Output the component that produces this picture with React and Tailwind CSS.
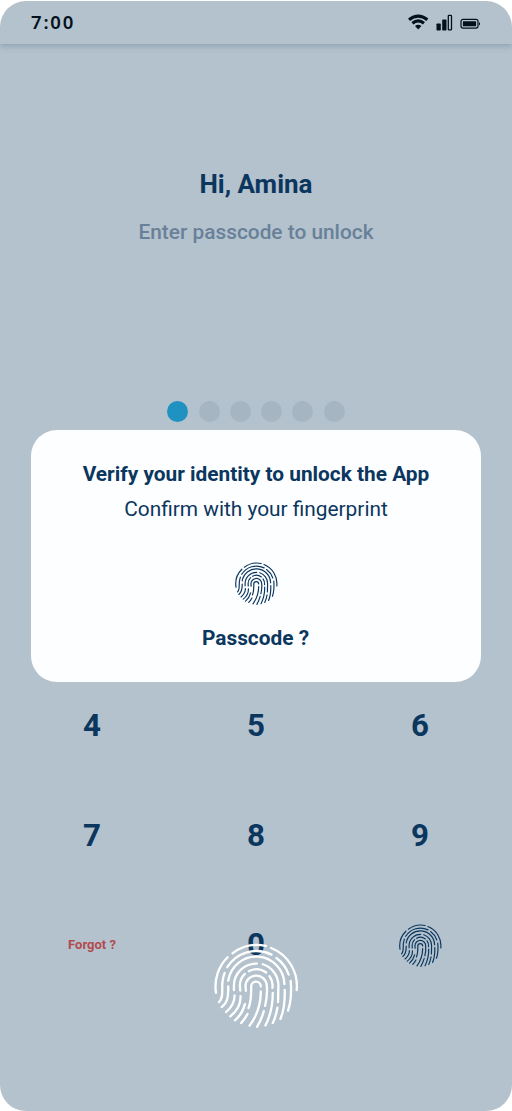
import React from "react";

const ridges = [
  "M82 99 A122 122 0 0 1 182 77",
  "M198 83 A123 123 0 0 1 275 210",
  "M67 111 A123 123 0 0 0 32 218",
  "M66 141 A103 103 0 0 1 199 103",
  "M214 113 A104 104 0 0 1 251 163",
  "M41 246 C51 237 51 224 51 208 C50 190 52 174 58 158",
  "M257 182 C260 216 258 246 249 272",
  "M69 181 A85 85 0 0 1 238 192",
  "M49 261 C66 249 69 233 69 199",
  "M239 209 C240 242 237 270 226 297",
  "M86 210 L86 197 A67 67 0 0 1 155 130",
  "M173 132 A67 67 0 0 1 220 197 L219 246",
  "M62 276 C80 261 88 247 88 226",
  "M217 263 C214 280 210 295 203 309",
  "M105 211 L104 197 A49 49 0 0 1 119 161",
  "M131 153 A49 49 0 0 1 183 157",
  "M193 168 A49 49 0 0 1 202 203",
  "M75 289 C97 272 107 254 106 228",
  "M203 218 C203 254 196 287 181 316",
  "M122 212 L121 198 A32 32 0 0 1 185 198 C187 221 184 240 180 257",
  "M89 301 C104 288 114 272 119 252",
  "M108 309 C116 300 122 291 127 282",
  "M130 264 C139 243 138 222 138 199 A14.5 14.5 0 0 1 167 199",
  "M167 214 C167 252 156 286 133 317",
  "M176 273 C171 290 165 306 156 320",
];

function Fingerprint({ className, strokeWidth = 7 }) {
  return (
    <svg viewBox="26 68 256 256" className={className} fill="none" stroke="currentColor" strokeWidth={strokeWidth} strokeLinecap="round">
      {ridges.map((d) => <path key={d} d={d} />)}
    </svg>
  );
}

function StatusBar() {
  return (
    <header className="flex h-[43px] shrink-0 items-center justify-between pl-[31px] pr-[30px] pt-[2px] text-[#03111d] shadow-[0_3px_5px_rgba(100,125,145,0.4)]">
      <span className="-mt-[3px] font-[family-name:'Noto_Sans',sans-serif] text-[18.5px] leading-none font-semibold tracking-[1.8px]">7:00</span>
      <svg viewBox="0 0 74 18" className="-mt-px h-[18px] w-[74px]" fill="none" stroke="currentColor">
        <path d="M1 5.8 Q10.2 -1.5 19.4 5.8 M4.4 9.2 Q10.2 4.4 16 9.2" strokeWidth="3.1" />
        <path d="M7 12 Q10.2 9.5 13.4 12 L10.2 15.5 Z" fill="currentColor" stroke="none" />
        <rect x="28.5" y="9.5" width="4.3" height="7" rx="0.7" fill="currentColor" stroke="none" />
        <rect x="34.2" y="5.4" width="4.3" height="11.1" rx="0.7" fill="currentColor" stroke="none" />
        <rect x="40.3" y="1.4" width="3.2" height="14.5" rx="0.7" strokeWidth="1.3" />
        <rect x="53" y="5.3" width="17" height="8.8" rx="2" strokeWidth="1.2" />
        <rect x="54.9" y="7.2" width="13.2" height="5" rx="0.5" fill="currentColor" stroke="none" />
        <path d="M71 7.9 Q73.2 9.7 71 11.5 Z" fill="currentColor" stroke="none" />
      </svg>
    </header>
  );
}

function VerifyCard() {
  return (
    <section className="absolute left-[31px] top-[430px] flex h-[252px] w-[450px] flex-col items-center rounded-[26px] bg-[#fdfeff] pt-[31px]">
      <h2 className="text-[20.85px] leading-[26px] font-bold whitespace-nowrap">Verify your identity to unlock the App</h2>
      <p className="mt-[9px] text-[20.85px] leading-[26px] whitespace-nowrap">Confirm with your fingerprint</p>
      <Fingerprint className="mt-[40.3px] size-[43px]" />
      <button className="mt-[19.7px] -ml-px text-[20.85px] leading-[26px] font-bold">Passcode ?</button>
    </section>
  );
}

export default function App() {
  return (
    <div className="h-[1111px] w-[512px] bg-white font-[Roboto,sans-serif] text-[#0b365e]">
      <main className="relative h-[1111px] bg-white pt-px">
        <div className="flex h-[1110px] flex-col overflow-hidden rounded-[26px] bg-[#b4c2cd]">
          <StatusBar />
          <div className="flex flex-col items-center pt-[124px]">
            <h1 className="text-[26px] leading-8 font-bold">Hi, Amina</h1>
            <p className="mt-[19px] text-[20.85px] leading-[26px] font-medium text-[#688199]">Enter passcode to unlock</p>
            <div className="mt-[156px] flex gap-[10.3px]">
              <span className="size-[21px] rounded-full bg-[#2092c2]" />
              {[1, 2, 3, 4, 5].map((dot) => <span key={dot} className="size-[21px] rounded-full bg-[#a6b5c2]" />)}
            </div>
          </div>
          <div className="mt-[249.4px] grid grid-cols-3 px-[10px] text-center text-[31.3px] leading-[109.5px] font-bold">
            {[4, 5, 6, 7, 8, 9].map((digit) => <button key={digit} className="h-[109.5px]">{digit}</button>)}
            <button className="h-[109.5px] text-[13px] text-[#b34a4d]">Forgot ?</button>
            <button className="h-[109.5px]">0</button>
            <button className="flex h-[109.5px] items-center justify-center"><Fingerprint className="size-[43px]" /></button>
          </div>
        </div>
        <Fingerprint className="absolute left-[213.5px] top-[943px] size-[85px] text-white" />
        <VerifyCard />
      </main>
    </div>
  );
}
